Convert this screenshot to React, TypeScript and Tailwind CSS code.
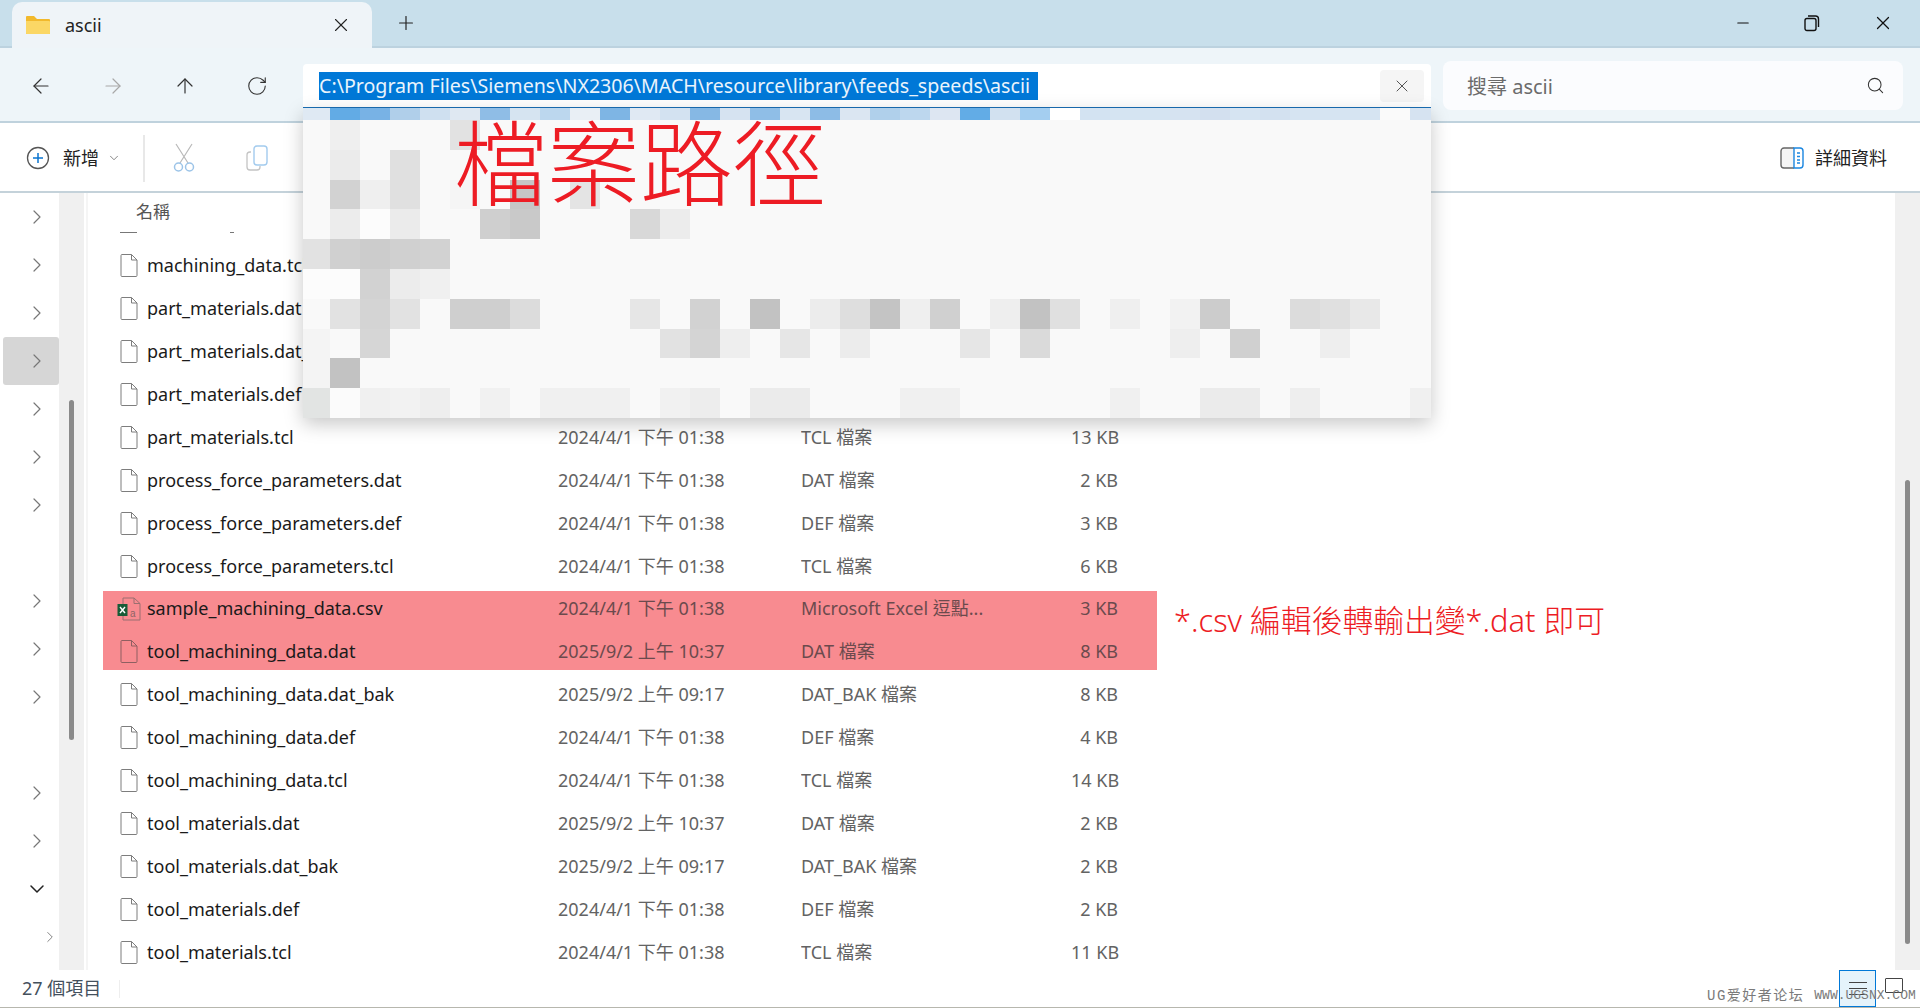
import { ArrowLeft, ArrowRight, ArrowUp, ChevronDown, ChevronRight, Minus, Plus, RotateCw, Search, X } from 'lucide-react'

type FileRow = { name: string; date: string; type: string; size: string; mark?: 'top' | 'bottom'; excel?: boolean }

const files: FileRow[] = [
  { name: 'machining_data.tcl', date: '2024/4/1 下午 01:38', type: 'TCL 檔案', size: '9 KB' },
  { name: 'part_materials.dat', date: '2024/4/1 下午 01:38', type: 'DAT 檔案', size: '2 KB' },
  { name: 'part_materials.dat_bak', date: '2024/4/1 下午 01:38', type: 'DAT_BAK 檔案', size: '2 KB' },
  { name: 'part_materials.def', date: '2024/4/1 下午 01:38', type: 'DEF 檔案', size: '2 KB' },
  { name: 'part_materials.tcl', date: '2024/4/1 下午 01:38', type: 'TCL 檔案', size: '13 KB' },
  { name: 'process_force_parameters.dat', date: '2024/4/1 下午 01:38', type: 'DAT 檔案', size: '2 KB' },
  { name: 'process_force_parameters.def', date: '2024/4/1 下午 01:38', type: 'DEF 檔案', size: '3 KB' },
  { name: 'process_force_parameters.tcl', date: '2024/4/1 下午 01:38', type: 'TCL 檔案', size: '6 KB' },
  { name: 'sample_machining_data.csv', date: '2024/4/1 下午 01:38', type: 'Microsoft Excel 逗點...', size: '3 KB', mark: 'top', excel: true },
  { name: 'tool_machining_data.dat', date: '2025/9/2 上午 10:37', type: 'DAT 檔案', size: '8 KB', mark: 'bottom' },
  { name: 'tool_machining_data.dat_bak', date: '2025/9/2 上午 09:17', type: 'DAT_BAK 檔案', size: '8 KB' },
  { name: 'tool_machining_data.def', date: '2024/4/1 下午 01:38', type: 'DEF 檔案', size: '4 KB' },
  { name: 'tool_machining_data.tcl', date: '2024/4/1 下午 01:38', type: 'TCL 檔案', size: '14 KB' },
  { name: 'tool_materials.dat', date: '2025/9/2 上午 10:37', type: 'DAT 檔案', size: '2 KB' },
  { name: 'tool_materials.dat_bak', date: '2025/9/2 上午 09:17', type: 'DAT_BAK 檔案', size: '2 KB' },
  { name: 'tool_materials.def', date: '2024/4/1 下午 01:38', type: 'DEF 檔案', size: '2 KB' },
  { name: 'tool_materials.tcl', date: '2024/4/1 下午 01:38', type: 'TCL 檔案', size: '11 KB' },
]

// nav tree chevrons, one per 48px row
const navRows = ['r', 'r', 'r', 'hover', 'r', 'r', 'r', '', 'r', 'r', 'r', '', 'r', 'r', 'down', 'in']

// blurred part of the address dropdown: top blue strip
const stripColors = [
  '#dfe9f3', '#62abe5', '#78b2e5', '#b0cfea', '#cfe0f0', '#dfe8f2', '#8fbde6', '#d6e4f1', '#bcd7ee', '#e9eff5',
  '#7eb5e4', '#e0e9f3', '#d3e2f1', '#86b8e4', '#d6e3f1', '#8fbee7', '#d8e5f2', '#8dbce6', '#dbe6f2', '#b0d0eb',
  '#bdd7ee', '#dde6f2', '#62ace6', '#d2e1f0', '#a4cef0', '#ffffff', '#d3e3f2', '#d5e4f2', '#d5e4f2', '#d6e3f1',
  '#d3e0ef', '#d6e4f2', '#d3e1f0', '#d6e4f2', '#d6e4f2', '#d6e4f2', '#fafafa', '#d6e3f1',
]

// blurred cells: row -> column -> grey
const mosaic: Record<number, string>[] = [
  { 1: '#efefef', 5: '#e2e2e2' },
  { 1: '#ebebeb', 3: '#e0e0e0' },
  { 1: '#d2d2d2', 2: '#efefef', 3: '#e0e0e0', 5: '#f5f5f5', 7: '#c6c6c6', 9: '#e4e4e4' },
  { 1: '#ececec', 2: '#fcfcfc', 3: '#ebebeb', 6: '#cfcfcf', 7: '#c9c9c9', 11: '#d8d8d8', 12: '#ececec' },
  { 0: '#e2e2e2', 1: '#d0d0d0', 2: '#cccccc', 3: '#d0d0d0', 4: '#d2d2d2' },
  { 0: '#fcfcfc', 1: '#fcfcfc', 2: '#d2d2d2', 3: '#ececec', 4: '#f0f0f0' },
  { 1: '#e2e2e2', 2: '#d4d4d4', 3: '#e2e2e2', 5: '#cfcfcf', 6: '#cfcfcf', 7: '#dcdcdc', 11: '#e6e6e6', 13: '#d2d2d2', 15: '#c2c2c2', 17: '#ececec', 18: '#dedede', 19: '#c4c4c4', 20: '#efefef', 21: '#d0d0d0', 23: '#eeeeee', 24: '#c2c2c2', 25: '#e0e0e0', 27: '#efefef', 29: '#f2f2f2', 30: '#cccccc', 33: '#dcdcdc', 34: '#e0e0e0', 35: '#e8e8e8' },
  { 0: '#f4f4f4', 2: '#d6d6d6', 12: '#e2e2e2', 13: '#d4d4d4', 14: '#eeeeee', 16: '#e6e6e6', 18: '#ececec', 22: '#e6e6e6', 24: '#dadada', 29: '#eeeeee', 31: '#d0d0d0', 34: '#eeeeee' },
  { 0: '#f4f4f4', 1: '#c2c2c2' },
  { 0: '#e2e4e3', 1: '#fbfbfb', 2: '#f0f0f0', 3: '#f2f2f2', 4: '#eeeeee', 6: '#f1f1f1', 8: '#f0f0f0', 9: '#f0f0f0', 10: '#f0f0f0', 12: '#f1f1f1', 13: '#ededed', 15: '#ebebeb', 16: '#ebebeb', 20: '#f0f0f0', 21: '#f0f0f0', 27: '#f0f0f0', 30: '#ebebeb', 31: '#ebebeb', 33: '#eeeeee', 37: '#f0f0f0' },
]

const cols = Array.from({ length: 38 }, (_, i) => i)

function FileIcon({ stroke = '#7d7d7d' }: { stroke?: string }) {
  return (
    <svg width="18" height="23" viewBox="0 0 18 23" fill="none" className="shrink-0">
      <path d="M1 1.5a1 1 0 0 1 1-1h9.5L17 6v15.5a1 1 0 0 1-1 1H2a1 1 0 0 1-1-1z" fill="#fff" fillOpacity={stroke === '#7d7d7d' ? 1 : 0} stroke={stroke} />
      <path d="M11.5.5V6H17" stroke={stroke} />
    </svg>
  )
}

function ExcelIcon() {
  return (
    <svg width="24" height="24" viewBox="0 0 24 24" fill="none" className="shrink-0 -ml-[3px]">
      <path d="M6 1h11l6 5.5V23H6z" stroke="#9a6f70" />
      <path d="M17 1v5.5h6" stroke="#9a6f70" />
      <rect x="0.5" y="7" width="10" height="12" fill="#185c37" />
      <path d="M3 10l5 6M8 10l-5 6" stroke="#fff" strokeWidth="1.4" />
      <text x="13" y="20" fontSize="10" fill="#8f6465" fontFamily="Liberation Sans, sans-serif">a</text>
    </svg>
  )
}

function RestoreIcon() {
  return (
    <svg width="16" height="18" viewBox="0 0 16 18" fill="none" stroke="#111" strokeWidth="1.4">
      <rect x="1" y="4.5" width="11" height="12" rx="2" />
      <path d="M4 2h7.5A3 3 0 0 1 14.5 5v8" />
    </svg>
  )
}

function AddIcon() {
  return (
    <svg width="24" height="24" viewBox="0 0 24 24" fill="none">
      <circle cx="12" cy="12" r="10.5" stroke="#555" strokeWidth="1.3" />
      <path d="M12 7v10M7 12h10" stroke="#0a74d0" strokeWidth="1.5" />
    </svg>
  )
}

function CutIcon() {
  return (
    <svg width="22" height="30" viewBox="0 0 22 30" fill="none">
      <path d="M3 1l12 19M19 1L7 20" stroke="#b9b9b9" strokeWidth="1.2" />
      <circle cx="5.5" cy="24" r="4" stroke="#9cc4e8" strokeWidth="1.5" />
      <circle cx="16.5" cy="24" r="4" stroke="#9cc4e8" strokeWidth="1.5" />
    </svg>
  )
}

function CopyIcon() {
  return (
    <svg width="22" height="26" viewBox="0 0 22 26" fill="none">
      <path d="M5 7H4a3 3 0 0 0-3 3v12a3 3 0 0 0 3 3h7a3 3 0 0 0 3-3v-1" stroke="#c4c4c4" strokeWidth="1.3" />
      <rect x="8" y="1" width="13" height="19" rx="3" stroke="#a3cbee" strokeWidth="1.4" />
    </svg>
  )
}

function DetailsIcon() {
  return (
    <svg width="24" height="22" viewBox="0 0 24 22" fill="none">
      <path d="M14 1H4a3 3 0 0 0-3 3v14a3 3 0 0 0 3 3h10" stroke="#666" strokeWidth="1.4" fill="#f5f5f5" />
      <path d="M14 1h6a3 3 0 0 1 3 3v14a3 3 0 0 1-3 3h-6z" stroke="#1a86e0" strokeWidth="1.4" fill="#fff" />
      <path d="M17 6h3M17 9.5h3M17 13h3M17 16h3" stroke="#1a86e0" strokeWidth="1.3" />
    </svg>
  )
}

function FolderIcon() {
  return (
    <svg width="24" height="20" viewBox="0 0 24 20">
      <path d="M0 2a1 1 0 0 1 1-1h7l3 3h12a1 1 0 0 1 1 1v13a1 1 0 0 1-1 1H1a1 1 0 0 1-1-1z" fill="#f2b92c" />
      <path d="M0 6h23a1 1 0 0 1 1 1v11a1 1 0 0 1-1 1H1a1 1 0 0 1-1-1z" fill="#fbd765" />
    </svg>
  )
}

function NavTree() {
  return (
    <div className="w-[59px] shrink-0 flex flex-col">
      {navRows.map((kind, i) => (
        <div key={i} className={`h-[48px] flex items-center justify-center rounded-[3px] ml-[3px] ${kind === 'hover' ? 'bg-[#d6d6d6]' : ''}`}>
          {(kind === 'r' || kind === 'hover') && <ChevronRight size={24} strokeWidth={1.2} className="text-[#777] ml-[12px]" />}
          {kind === 'down' && <ChevronDown size={24} strokeWidth={1.5} className="text-[#222] ml-[12px]" />}
          {kind === 'in' && <ChevronRight size={24} strokeWidth={1.2} className="text-[#777] ml-[38px]" />}
        </div>
      ))}
    </div>
  )
}

function AddressDropdown() {
  return (
    <div className="absolute left-0 right-0 top-[44px] z-10 shadow-[0_6px_18px_rgba(0,0,0,0.22)]">
      <div className="grid grid-cols-[27px_repeat(36,30px)_21px] h-[12px] overflow-hidden">
        {stripColors.map((c, i) => (
          <div key={i} style={{ background: c }} />
        ))}
      </div>
      <div className="relative bg-[#f9f9f9]">
        {mosaic.map((row, r) => (
          <div key={r} className="grid grid-cols-[27px_repeat(36,30px)_21px] h-[29.8px]">
            {cols.map((c) => (
              <div key={c} style={{ background: row[c] ?? '#f9f9f9' }} />
            ))}
          </div>
        ))}
        <div className="absolute left-[151px] top-[-12px] text-[93px] leading-[110px] text-[#ed1c24] font-light whitespace-nowrap">檔案路徑</div>
      </div>
    </div>
  )
}

export default function App() {
  return (
    <div className="relative w-[1920px] h-[1008px] overflow-hidden bg-white flex flex-col font-['Noto_Sans','Noto_Sans_CJK_TC',sans-serif] text-[18px] text-[#1a1a1a]">
      {/* title bar */}
      <div className="h-[48px] shrink-0 flex items-end pl-[12px] bg-[#c8dfeb] border-b-2 border-[#bcd2df]">
        <div className="w-[360px] h-[46px] -mb-[2px] flex items-center pl-[14px] pr-[20px] bg-[#eff4f8] rounded-t-[10px]">
          <FolderIcon />
          <span className="ml-[15px] text-[#222]">ascii</span>
          <X size={22} strokeWidth={1.2} className="ml-auto text-[#222]" />
        </div>
        <div className="w-[68px] h-[46px] flex items-center justify-center">
          <Plus size={22} strokeWidth={1.3} className="text-[#222]" />
        </div>
        <div className="ml-auto h-[46px] flex items-center pr-[26px] gap-[52px]">
          <Minus size={18} strokeWidth={1.4} className="text-[#111]" />
          <RestoreIcon />
          <X size={22} strokeWidth={1.3} className="text-[#111]" />
        </div>
      </div>

      {/* nav + address row */}
      <div className="h-[75px] shrink-0 flex pl-[5px] bg-[#eef5f9] border-b-2 border-[#bfd2dd]">
        <div className="h-[73px] w-[72px] pt-[2px] flex items-center justify-center"><ArrowLeft size={24} strokeWidth={1.2} className="text-[#333]" /></div>
        <div className="h-[73px] w-[72px] pt-[2px] flex items-center justify-center"><ArrowRight size={24} strokeWidth={1.2} className="text-[#a8a8a8]" /></div>
        <div className="h-[73px] w-[72px] pt-[2px] flex items-center justify-center"><ArrowUp size={24} strokeWidth={1.2} className="text-[#333]" /></div>
        <div className="h-[73px] w-[72px] pt-[2px] flex items-center justify-center"><RotateCw size={22} strokeWidth={1.2} className="text-[#333]" /></div>
        <div className="relative z-10 ml-[10px] mt-[16px] w-[1128px] h-[44px] flex items-center pl-[16px] pr-[7px] bg-white rounded-t-[4px] border-b border-[#1a6fb5]">
          <span className="h-[28px] leading-[28px] w-[719px] whitespace-nowrap text-[19.6px] text-[#eaf4fc] bg-[#0078d7]">C:\Program Files\Siemens\NX2306\MACH\resource\library\feeds_speeds\ascii</span>
          <div className="ml-auto w-[44px] h-[32px] flex items-center justify-center rounded-[4px] bg-[#f5f5f5]">
            <X size={20} strokeWidth={1.1} className="text-[#444]" />
          </div>
          <AddressDropdown />
        </div>
        <div className="ml-[12px] mt-[13px] w-[460px] h-[49px] flex items-center pl-[24px] pr-[18px] bg-[#fbfcfe] rounded-[8px]">
          <span className="text-[20px] pt-[2px] text-[#6b6b6b]">搜尋 ascii</span>
          <Search size={19} strokeWidth={1.3} className="ml-auto text-[#333]" />
        </div>
      </div>

      {/* command bar */}
      <div className="h-[70px] shrink-0 flex items-center pl-[26px] pr-[33px] pt-[2px] bg-white border-b-2 border-[#c4d2da]">
        <AddIcon />
        <span className="ml-[13px] text-[#222]">新增</span>
        <ChevronDown size={14} strokeWidth={1.2} className="ml-[8px] text-[#555]" />
        <div className="ml-[22px] w-[2px] h-[47px] bg-[#e8e8e8]" />
        <div className="ml-[28px]"><CutIcon /></div>
        <div className="ml-[51px]"><CopyIcon /></div>
        <div className="ml-auto flex items-center gap-[11px]">
          <DetailsIcon />
          <span className="text-[#222]">詳細資料</span>
        </div>
      </div>

      {/* content */}
      <div className="relative flex-1 min-h-0 flex overflow-hidden">
        <NavTree />
        <div className="w-[25px] shrink-0 pt-[207px] bg-[#f0f0f0]">
          <div className="ml-[10px] w-[5px] h-[340px] rounded-full bg-[#8a8a8a]" />
        </div>
        <div className="w-[2px] ml-[2px] shrink-0 bg-[#f5f5f5]" />
        <div className="flex-1 pl-[15px]">
          <div className="w-[1054px]">
            <div className="h-[38px] pl-[33px] flex items-center text-[17px] text-[#555]">名稱</div>
            <div className="h-[13px] relative">
              <div className="absolute left-[17px] top-[1px] w-[17px] h-[1px] bg-[#777]" />
              <div className="absolute left-[127px] top-[1px] w-[4px] h-[1px] bg-[#777]" />
            </div>
            {files.map((f) => (
              <div
                key={f.name}
                className={`h-[42.94px] flex items-center ${f.mark === 'top' ? 'bg-[linear-gradient(to_bottom,transparent_3px,#f88b90_3px)]' : ''} ${f.mark === 'bottom' ? 'bg-[linear-gradient(to_top,transparent_3px,#f88b90_3px)]' : ''}`}
              >
                <div className="w-[44px] pl-[17px] shrink-0 flex">
                  {f.excel ? <ExcelIcon /> : <FileIcon stroke={f.mark ? '#8f5f61' : '#7d7d7d'} />}
                </div>
                <span className="w-[411px] shrink-0 whitespace-nowrap">{f.name}</span>
                <span className={`w-[243px] shrink-0 whitespace-nowrap ${f.mark ? 'text-[#6b4a4d]' : 'text-[#636363]'}`}>{f.date}</span>
                <span className={`w-[270px] shrink-0 whitespace-nowrap overflow-hidden ${f.mark ? 'text-[#6b4a4d]' : 'text-[#636363]'}`}>{f.type}</span>
                <span className={`w-[47px] shrink-0 text-right whitespace-nowrap ${f.mark ? 'text-[#6b4a4d]' : 'text-[#636363]'}`}>{f.size}</span>
              </div>
            ))}
          </div>
        </div>
        <div className="w-[25px] shrink-0 pt-[287px] bg-[#f0f0f0]">
          <div className="ml-[10px] w-[5px] h-[464px] rounded-full bg-[#8a8a8a]" />
        </div>
        {/* hand-written note over the list */}
        <div className="absolute left-[1174px] top-[407px] h-[40px] leading-[40px] text-[30.8px] font-light text-[#ed1c24] whitespace-nowrap">*.csv 編輯後轉輸出變*.dat 即可</div>
      </div>

      {/* status bar */}
      <div className="relative h-[38px] shrink-0 flex items-center pl-[22px] bg-white border-b border-[#b7b7ae]">
        <span className="text-[18px] text-[#44505c]">27 個項目</span>
        <div className="ml-[18px] w-[1px] h-[18px] bg-[#eeeeee]" />
        <div className="ml-auto mr-[17px] flex items-center gap-[9px]">
          <div className="w-[37px] h-[37px] flex flex-col items-center justify-center gap-[5px] bg-[#e5f3fb] border-[1.5px] border-[#0078d7]">
            <div className="w-[18px] h-[1px] bg-[#444]" />
            <div className="w-[18px] h-[1px] bg-[#444]" />
            <div className="w-[18px] h-[1px] bg-[#444]" />
          </div>
          <div className="w-[18px] h-[15px] mb-[6px] rounded-[1px] border border-[#444]" />
        </div>
        {/* forum watermark */}
        <div className="absolute left-[1707px] top-[16px] flex items-center gap-[10px] leading-[20px] text-[#7a7a7a] whitespace-nowrap font-['Liberation_Mono','Noto_Sans_CJK_SC',monospace]">
          <span className="text-[14px] tracking-[1.5px]">UG爱好者论坛</span>
          <span className="text-[13px]">WWW.UGSNX.COM</span>
        </div>
      </div>
    </div>
  )
}
